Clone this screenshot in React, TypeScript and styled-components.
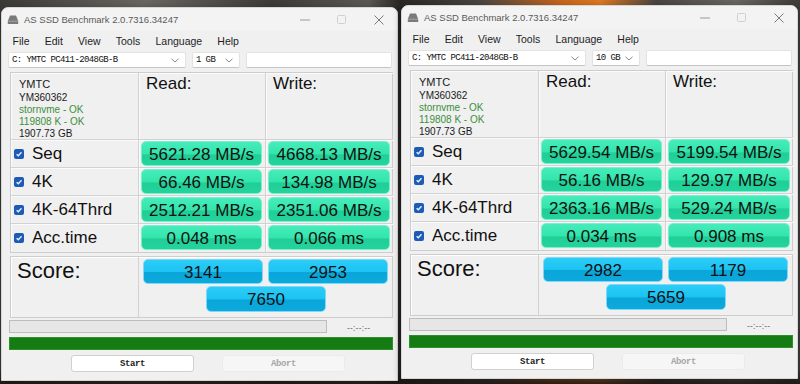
import React from "react";
import styled, { createGlobalStyle } from "styled-components";

const GlobalStyle = createGlobalStyle`
  html, body { margin: 0; padding: 0; }
  body {
    width: 800px;
    height: 384px;
    overflow: hidden;
    font-family: "Liberation Sans", Arial, sans-serif;
  }
`;

const Desktop = styled.div`
  display: flex;
  align-items: flex-start;
  gap: 3px;
  padding-left: 1px;
  width: 800px;
  height: 384px;
  box-sizing: border-box;
  overflow: hidden;
  background:
    linear-gradient(180deg, rgba(0,0,0,0) 0%, rgba(0,0,0,0) 96%, rgba(30,25,22,0.9) 100%),
    linear-gradient(90deg, #3b3936 0%, #6a6662 18%, #3d3a37 34%, #5c5855 46%, #2a2725 50%, #4a4644 60%, #c8661c 70%, #e07a22 75%, #4a4442 82%, #6b6764 92%, #3e3b39 100%);
`;

const Window = styled.div<{ $top: number }>`
  flex-shrink: 0;
  margin-top: ${(p) => p.$top}px;
  width: 397px;
  height: 374px;
  box-sizing: border-box;
  background: #f0f0f0;
  border: 1px solid #d6d6d6;
  border-radius: 7px 7px 0 0;
  box-shadow: 0 2px 8px rgba(0, 0, 0, 0.35);
  display: flex;
  flex-direction: column;
  overflow: hidden;
`;

const TitleBar = styled.div`
  height: 23px;
  display: flex;
  align-items: center;
  padding-left: 5px;
  background: #f3f3f3;
`;

const TitleText = styled.span`
  margin-left: 5px;
  font-size: 9.5px;
  color: #5a5a5a;
  white-space: nowrap;
`;

const Controls = styled.div`
  margin-left: auto;
  display: flex;
  height: 100%;
`;

const ControlBox = styled.div`
  width: 37px;
  height: 100%;
  display: flex;
  align-items: center;
  justify-content: center;
`;

const MenuBar = styled.div`
  height: 20px;
  display: flex;
  align-items: center;
  padding-left: 3px;
`;

const MenuItem = styled.span`
  padding: 0 7.6px;
  font-size: 10.5px;
  color: #1e1e1e;
`;

const SelectRow = styled.div`
  display: flex;
  gap: 6px;
  height: 16px;
  margin-top: 1px;
  padding: 0 5px 0 6px;
`;

const SelectBox = styled.div<{ $w?: number }>`
  ${(p) => (p.$w ? `width: ${p.$w}px; flex-shrink: 0;` : "flex: 1;")}
  box-sizing: border-box;
  height: 16px;
  background: #ffffff;
  border: 1px solid #e2e2e2;
  border-bottom-color: #c4c4c4;
  border-radius: 2px;
  display: flex;
  align-items: center;
  padding: 0 6px 0 3px;
  font-family: "Liberation Mono", "DejaVu Sans Mono", monospace;
  font-size: 9px;
  letter-spacing: -0.6px;
  color: #111;
  white-space: nowrap;
`;

const Chevron = styled.svg`
  margin-left: auto;
  flex-shrink: 0;
`;

const Panel = styled.div`
  margin: 4px 4px 0 8px;
  display: grid;
  grid-template-columns: 128px 127px 127px;
  border: 1px solid #cdcdcd;
  box-shadow: inset 1px 1px 0 #ffffff;
`;

const Cell = styled.div<{ $h: number; $last?: boolean; $right?: boolean }>`
  height: ${(p) => p.$h}px;
  box-sizing: border-box;
  border-bottom: ${(p) => (p.$last ? "none" : "1px solid #d2d2d2")};
  border-right: ${(p) => (p.$right ? "none" : "1px solid #d2d2d2")};
  box-shadow: inset 1px 1px 0 #fbfbfb;
`;

const InfoCell = styled(Cell)`
  padding: 4px 0 0 8px;
  display: flex;
  flex-direction: column;
`;

const InfoLine = styled.span<{ $c?: string; $s?: number; $lh?: number }>`
  font-size: ${(p) => p.$s ?? 10}px;
  line-height: ${(p) => p.$lh ?? 12}px;
  color: ${(p) => p.$c ?? "#1a1a1a"};
  white-space: nowrap;
`;

const HeadCell = styled(Cell)`
  padding: 1px 0 0 7px;
  font-size: 17px;
  line-height: 20px;
  color: #111;
`;

const LabelCell = styled(Cell)`
  display: flex;
  align-items: center;
  padding-left: 3px;
  gap: 8px;
  font-size: 17px;
  color: #111;
`;

const CheckBox = styled.span`
  width: 10px;
  height: 10px;
  border-radius: 2px;
  background: #1d5cb6;
  display: flex;
  align-items: center;
  justify-content: center;
  flex-shrink: 0;
`;

const ValueCell = styled(Cell)`
  padding: 1px 3px 0 2px;
`;

const Pill = styled.div<{ $kind: "green" | "blue" }>`
  height: 25px;
  box-sizing: border-box;
  border-radius: 5px;
  display: flex;
  align-items: center;
  justify-content: center;
  padding-top: 2px;
  font-size: 17px;
  color: #111;
  white-space: nowrap;
  background: ${(p) =>
    p.$kind === "green"
      ? "linear-gradient(180deg, #46ecbb 0%, #33e5ab 52%, #20cf97 56%, #25d39c 100%)"
      : "linear-gradient(180deg, #2ccdf7 0%, #1cc3f2 50%, #0aa6d9 54%, #0ca9dc 100%)"};
  border: 1px solid ${(p) => (p.$kind === "green" ? "#7aeecd" : "#7fd8f6")};
`;

const ScoreBlock = styled.div`
  margin: 3px 4px 0 8px;
  height: 62px;
  box-sizing: border-box;
  display: grid;
  grid-template-columns: 128px 1fr;
  border: 1px solid #cdcdcd;
  box-shadow: inset 1px 1px 0 #ffffff;
`;

const ScoreLabel = styled.div`
  border-right: 1px solid #d2d2d2;
  padding: 1px 0 0 6px;
  font-size: 22px;
  line-height: 25px;
  color: #111;
`;

const ScoreGrid = styled.div`
  display: grid;
  grid-template-columns: 120px 120px;
  column-gap: 5px;
  row-gap: 2px;
  padding: 2px 0 0 4px;
  align-content: start;
`;

const TotalWrap = styled.div`
  grid-column: 1 / span 2;
  display: flex;
  justify-content: center;
  padding-left: 1px;
`;

const TotalPill = styled(Pill)`
  width: 120px;
  height: 26px;
`;

const ProgressRow = styled.div`
  display: flex;
  align-items: center;
  margin: 2px 0 0 7px;
  height: 13px;
`;

const ProgressBar = styled.div`
  width: 318px;
  height: 13px;
  box-sizing: border-box;
  background: #e6e6e6;
  border: 1px solid #bdbdbd;
`;

const TimeText = styled.span`
  margin-left: 20px;
  margin-top: 2px;
  font-size: 8.5px;
  color: #6a6a6a;
  letter-spacing: 0.2px;
`;

const GreenBar = styled.div`
  margin: 4px 4px 0 7px;
  height: 13px;
  box-sizing: border-box;
  background: #157b13;
  border: 1px solid #2f8f2c;
`;

const ButtonRow = styled.div`
  display: flex;
  gap: 28px;
  margin: 5px 0 0 69px;
`;

const Button = styled.div<{ $disabled?: boolean }>`
  width: 123px;
  height: 17px;
  box-sizing: border-box;
  border-radius: 3px;
  display: flex;
  align-items: center;
  justify-content: center;
  font-family: "Liberation Mono", "DejaVu Sans Mono", monospace;
  font-weight: bold;
  font-size: 9px;
  letter-spacing: -0.4px;
  background: ${(p) => (p.$disabled ? "#f6f6f6" : "#ffffff")};
  border: 1px solid ${(p) => (p.$disabled ? "#ebebeb" : "#d0d0d0")};
  color: ${(p) => (p.$disabled ? "#a6a6a6" : "#222")};
`;

type Result = {
  top: number;
  size: string;
  rows: { label: string; read: string; write: string }[];
  score: [string, string, string];
};

const results: Result[] = [
  {
    top: 7,
    size: "1 GB",
    rows: [
      { label: "Seq", read: "5621.28 MB/s", write: "4668.13 MB/s" },
      { label: "4K", read: "66.46 MB/s", write: "134.98 MB/s" },
      { label: "4K-64Thrd", read: "2512.21 MB/s", write: "2351.06 MB/s" },
      { label: "Acc.time", read: "0.048 ms", write: "0.066 ms" },
    ],
    score: ["3141", "2953", "7650"],
  },
  {
    top: 5,
    size: "10 GB",
    rows: [
      { label: "Seq", read: "5629.54 MB/s", write: "5199.54 MB/s" },
      { label: "4K", read: "56.16 MB/s", write: "129.97 MB/s" },
      { label: "4K-64Thrd", read: "2363.16 MB/s", write: "529.24 MB/s" },
      { label: "Acc.time", read: "0.034 ms", write: "0.908 ms" },
    ],
    score: ["2982", "1179", "5659"],
  },
];

const DriveIcon = () => (
  <svg width="12" height="11" viewBox="0 0 12 11">
    <path d="M3 1.5 H9 L11.2 7 V10 H0.8 V7 Z" fill="#7a7a7a" />
    <path d="M1 7.2 H11" stroke="#b0b0b0" strokeWidth="0.8" />
  </svg>
);

const ChevronIcon = () => (
  <Chevron width="8" height="5" viewBox="0 0 8 5">
    <path d="M0.5 0.8 L4 4 L7.5 0.8" fill="none" stroke="#8a8a8a" strokeWidth="1" />
  </Chevron>
);

const Check = () => (
  <svg width="8" height="8" viewBox="0 0 8 8">
    <path d="M1.6 4.2 L3.3 5.8 L6.5 2.3" fill="none" stroke="#eaf2ff" strokeWidth="1.3" />
  </svg>
);

const BenchWindow = ({ r }: { r: Result }) => (
  <Window $top={r.top}>
    <TitleBar>
      <DriveIcon />
      <TitleText>AS SSD Benchmark 2.0.7316.34247</TitleText>
      <Controls>
        <ControlBox>
          <svg width="10" height="2" viewBox="0 0 10 2">
            <path d="M0 1 H10" stroke="#9a9a9a" strokeWidth="1" />
          </svg>
        </ControlBox>
        <ControlBox>
          <svg width="9" height="9" viewBox="0 0 9 9">
            <rect x="0.5" y="0.5" width="8" height="8" rx="1" fill="none" stroke="#d0d0d0" />
          </svg>
        </ControlBox>
        <ControlBox>
          <svg width="10" height="10" viewBox="0 0 10 10">
            <path d="M0.5 0.5 L9.5 9.5 M9.5 0.5 L0.5 9.5" stroke="#7a7a7a" strokeWidth="1" />
          </svg>
        </ControlBox>
      </Controls>
    </TitleBar>
    <MenuBar>
      {["File", "Edit", "View", "Tools", "Language", "Help"].map((m) => (
        <MenuItem key={m}>{m}</MenuItem>
      ))}
    </MenuBar>
    <SelectRow>
      <SelectBox $w={178}>
        C: YMTC PC411-2048GB-B
        <ChevronIcon />
      </SelectBox>
      <SelectBox $w={48}>
        {r.size}
        <ChevronIcon />
      </SelectBox>
      <SelectBox />
    </SelectRow>
    <Panel>
      <InfoCell $h={67}>
        <InfoLine $s={11} $lh={15}>YMTC</InfoLine>
        <InfoLine>YM360362</InfoLine>
        <InfoLine $c="#3c8f3a">stornvme - OK</InfoLine>
        <InfoLine $c="#3c8f3a">119808 K - OK</InfoLine>
        <InfoLine>1907.73 GB</InfoLine>
      </InfoCell>
      <HeadCell $h={67}>Read:</HeadCell>
      <HeadCell $h={67} $right>Write:</HeadCell>
      {r.rows.map((row, i) => {
        const last = i === r.rows.length - 1;
        return (
          <React.Fragment key={row.label}>
            <LabelCell $h={28} $last={last}>
              <CheckBox>
                <Check />
              </CheckBox>
              {row.label}
            </LabelCell>
            <ValueCell $h={28} $last={last}>
              <Pill $kind="green">{row.read}</Pill>
            </ValueCell>
            <ValueCell $h={28} $last={last} $right>
              <Pill $kind="green">{row.write}</Pill>
            </ValueCell>
          </React.Fragment>
        );
      })}
    </Panel>
    <ScoreBlock>
      <ScoreLabel>Score:</ScoreLabel>
      <ScoreGrid>
        <Pill $kind="blue">{r.score[0]}</Pill>
        <Pill $kind="blue">{r.score[1]}</Pill>
        <TotalWrap>
          <TotalPill $kind="blue">{r.score[2]}</TotalPill>
        </TotalWrap>
      </ScoreGrid>
    </ScoreBlock>
    <ProgressRow>
      <ProgressBar />
      <TimeText>--:--:--</TimeText>
    </ProgressRow>
    <GreenBar />
    <ButtonRow>
      <Button>Start</Button>
      <Button $disabled>Abort</Button>
    </ButtonRow>
  </Window>
);

export default function App() {
  return (
    <>
      <GlobalStyle />
      <Desktop>
        {results.map((r, i) => (
          <BenchWindow key={i} r={r} />
        ))}
      </Desktop>
    </>
  );
}
